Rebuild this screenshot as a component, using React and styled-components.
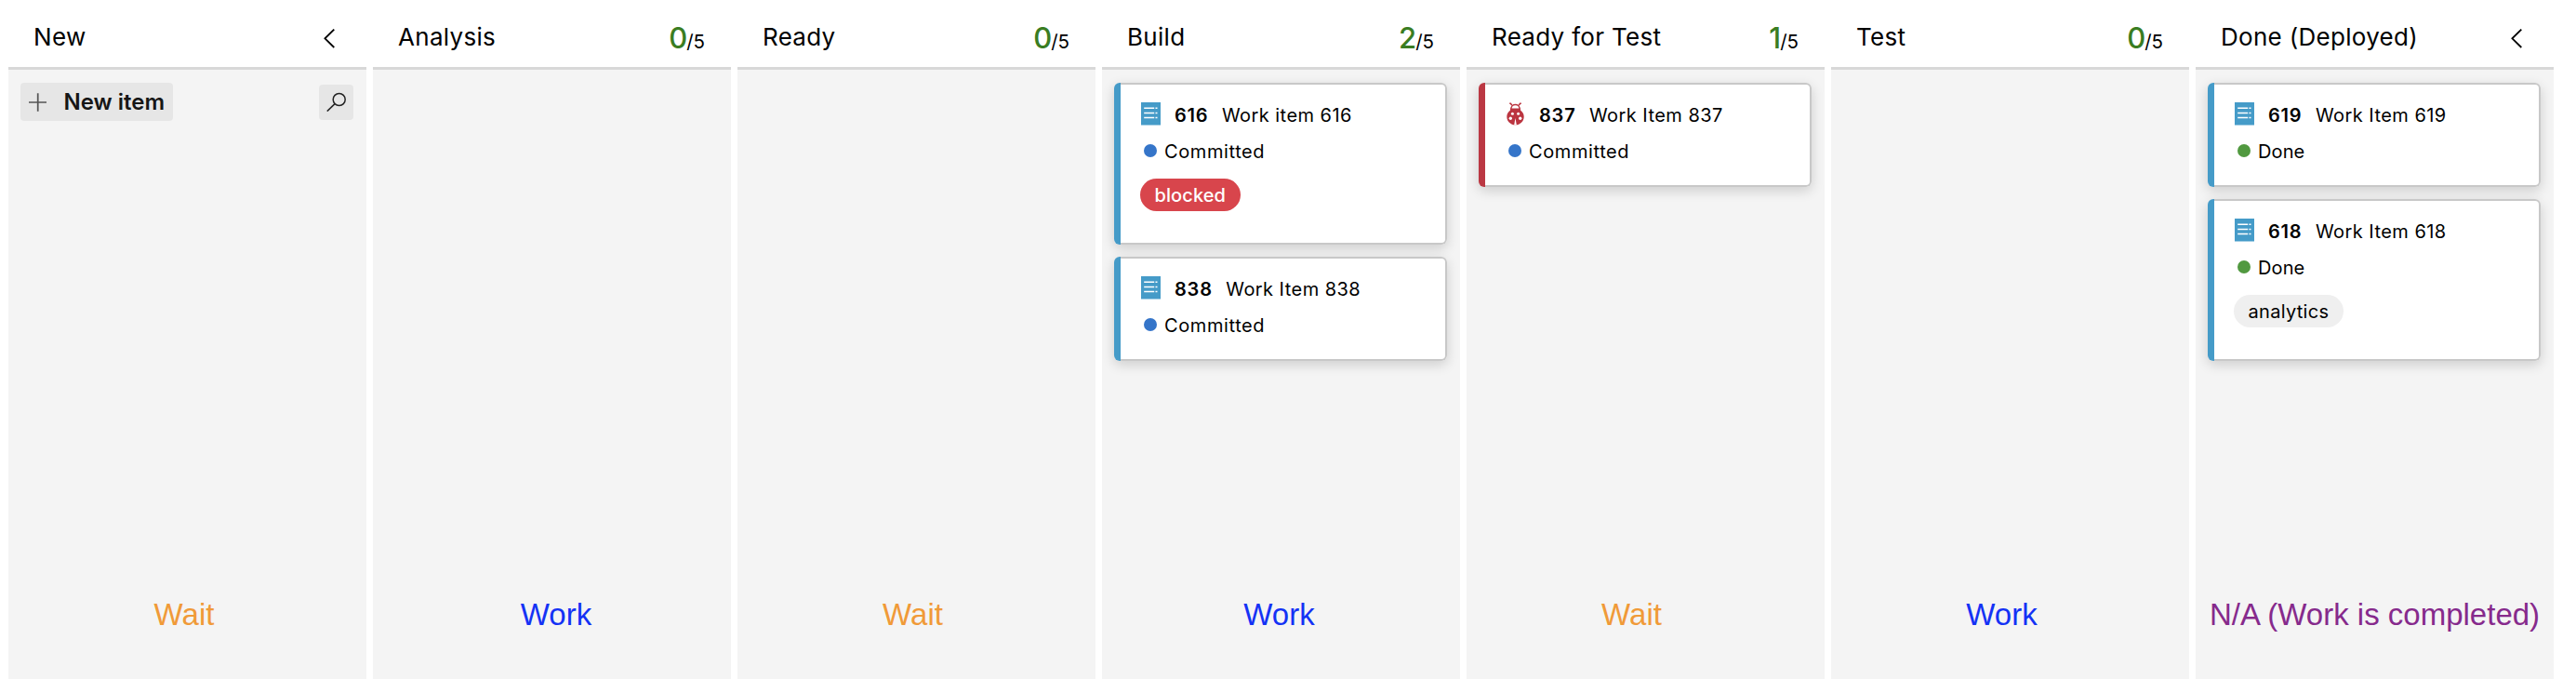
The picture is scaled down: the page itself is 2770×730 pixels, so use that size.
import React from "react";
import styled, { createGlobalStyle } from "styled-components";

const GlobalStyle = createGlobalStyle`
  * { box-sizing: border-box; }
  body { margin: 0; background: #fff; color: #000; font-family: Inter, "Liberation Sans", sans-serif; }
`;

const Board = styled.main`
  display: flex;
  gap: 7px;
  height: 730px;
  padding-left: 9px;
  overflow: hidden;
`;

const Column = styled.section`
  display: flex;
  flex: none;
  flex-direction: column;
  width: 385px;
`;

const ColumnHeader = styled.header`
  display: flex;
  justify-content: space-between;
  height: 75px;
  padding: 0 28px 0 27px;
  border-bottom: 3px solid #d8d8d8;
`;

const ColumnTitle = styled.h2`
  margin: 0;
  padding-top: 24px;
  font-size: 26px;
  font-weight: 400;
  line-height: 32px;
  letter-spacing: 0.3px;
  white-space: nowrap;
`;

const Limit = styled.div`
  display: flex;
  align-items: baseline;
  height: 40px;
  margin-top: 21px;
  font-size: 20.5px;
  line-height: 40px;
`;

const Count = styled.span`
  color: #3a7d22;
  font-size: 31px;
  font-weight: 500;
  letter-spacing: -1px;
`;

const CollapseIcon = styled.svg`
  width: 12px;
  height: 21px;
  margin: 31px 6px 0 0;
`;

const ColumnBody = styled.div`
  display: flex;
  flex: 1;
  flex-direction: column;
  gap: 13px;
  padding: 14px 14px 0 13px;
  background: #f4f4f4;
`;

const Toolbar = styled.div`
  display: flex;
  align-items: center;
  justify-content: space-between;
`;

const NewItemButton = styled.button`
  display: flex;
  align-items: center;
  gap: 18px;
  width: 164px;
  height: 41px;
  padding: 0 9px;
  border: 0;
  border-radius: 4px;
  background: #e6e6e6;
  color: #161616;
  font: 600 24px/41px Inter, sans-serif;
  white-space: nowrap;
`;

const SearchButton = styled.button`
  display: flex;
  width: 37px;
  height: 38px;
  padding: 8px;
  border: 0;
  border-radius: 4px;
  background: #e6e6e6;
`;

const CardFrame = styled.article`
  display: flex;
  height: ${(p) => (p.$tagged ? "174px" : "112px")};
  border-radius: 6px;
  background: linear-gradient(90deg, ${(p) => p.$accent} 7px, #fff 7px);
  box-shadow: 0 4px 13px rgba(0, 0, 0, 0.16);
`;

const CardContent = styled.div`
  flex: 1;
  margin-left: 7px;
  padding: 19px 0 0 22px;
  border: 2px solid #c8c8c8;
  border-left: 0;
  border-radius: 0 6px 6px 0;
`;

const TitleRow = styled.div`
  display: flex;
  height: 30px;
  font-size: 20px;
  letter-spacing: 0.45px;
  line-height: 28px;
  white-space: nowrap;
`;

const TypeIcon = styled.svg`
  width: 21px;
  height: 25px;
  margin-right: 15px;
`;

const ItemId = styled.strong`
  margin-right: 14.5px;
  font-weight: 600;
  letter-spacing: 0.8px;
`;

const StateRow = styled.div`
  display: flex;
  align-items: center;
  gap: 8px;
  height: 30px;
  margin-top: 7px;
  padding-left: 3px;
`;

const StateDot = styled.span`
  width: 14px;
  height: 14px;
  margin-top: -1px;
  border-radius: 50%;
  background: ${(p) => p.$color};
`;

const StateName = styled.span`
  padding-top: 1px;
  font-size: 20px;
  letter-spacing: ${(p) => (p.$compact ? "0.1px" : "0.6px")};
`;

const Tag = styled.span`
  display: block;
  width: fit-content;
  height: 35px;
  margin: 15px 0 0 -1px;
  padding: 0 15.5px;
  border-radius: 18px;
  background: ${(p) => (p.$alert ? "#d8454c" : "#efefef")};
  color: ${(p) => (p.$alert ? "#fff" : "#000")};
  font-size: 20px;
  font-weight: ${(p) => (p.$alert ? 500 : 400)};
  letter-spacing: ${(p) => (p.$alert ? "0.1px" : "0.3px")};
  line-height: 37px;
`;

const PhaseLabel = styled.footer`
  display: flex;
  justify-content: center;
  margin: auto -14px 50px -13px;
  padding-left: ${(p) => Math.max(p.$shift, 0) * 2}px;
  padding-right: ${(p) => Math.max(-p.$shift, 0) * 2}px;
  color: ${(p) => p.$color};
  font: 33px/38px "Liberation Sans", Arial, sans-serif;
  white-space: nowrap;
`;

const BacklogIcon = () => (
  <TypeIcon viewBox="0 0 21 25">
    <path fill="#459bc8" d="M0 0h21v24.500H0z" />
    <path stroke="#fff" strokeWidth="1.500" d="M3.200 6.200h11M15.500 6.200h2M3.200 11.400h11M15.500 11.400h2M3.200 16.600h11M15.500 16.600h2" />
  </TypeIcon>
);

const BugIcon = () => (
  <TypeIcon viewBox="0 0 21 25">
    <g fill="none" stroke="#bb3540" strokeWidth="1.500">
      <path d="M4.200 1.200h1.200l1.500 2M16.800 1.200h-1.200l-1.500 2" />
      <path d="M5.800 7.500C5.800 0.800 15.200 0.800 15.200 7.500" />
    </g>
    <path fill="#bb3540" d="M5 6.500h11v2.100c2.200 1.700 3.700 4 3.700 6.800 0 5.100-4.100 8.800-9.200 8.800s-9.200-3.700-9.200-8.800C1.300 12.600 2.800 10.300 5 8.600z" />
    <path fill="#fff" d="M10.500 17l1.300 7.200H9.200z" />
    <g fill="#fff">
      <circle cx="7.400" cy="12.300" r="1.500" />
      <circle cx="13.600" cy="12.300" r="1.500" />
      <circle cx="5.300" cy="17.300" r="1.700" />
      <circle cx="15.700" cy="17.300" r="1.700" />
    </g>
  </TypeIcon>
);

const states = { Committed: "#3575c9", Done: "#519940" };

function Card({ id, title, state, tag, bug }) {
  return (
    <CardFrame $tagged={Boolean(tag)} $accent={bug ? "#bb3843" : "#459bc8"}>
      <CardContent>
        <TitleRow>
          {bug ? <BugIcon /> : <BacklogIcon />}
          <ItemId>{id}</ItemId>
          <span>{title}</span>
        </TitleRow>
        <StateRow>
          <StateDot $color={states[state]} />
          <StateName $compact={state === "Done"}>{state}</StateName>
        </StateRow>
        {tag && <Tag $alert={tag === "blocked"}>{tag}</Tag>}
      </CardContent>
    </CardFrame>
  );
}

const phases = { Wait: "#f09a38", Work: "#1432f5", "N/A (Work is completed)": "#862a8c" };

const columns = [
  { title: "New", phase: "Wait", shift: -3.5, backlog: true },
  { title: "Analysis", count: 0, phase: "Work", shift: 4.5 },
  { title: "Ready", count: 0, phase: "Wait", shift: -4 },
  {
    title: "Build", count: 2, phase: "Work", shift: -2,
    cards: [
      { id: 616, title: "Work item 616", state: "Committed", tag: "blocked" },
      { id: 838, title: "Work Item 838", state: "Committed" },
    ],
  },
  {
    title: "Ready for Test", count: 1, phase: "Wait", shift: -15,
    cards: [{ id: 837, title: "Work Item 837", state: "Committed", bug: true }],
  },
  { title: "Test", count: 0, phase: "Work", shift: -9 },
  {
    title: "Done (Deployed)", phase: "N/A (Work is completed)", shift: 0,
    cards: [
      { id: 619, title: "Work Item 619", state: "Done" },
      { id: 618, title: "Work Item 618", state: "Done", tag: "analytics" },
    ],
  },
];

export default function App() {
  return (
    <>
      <GlobalStyle />
      <Board>
        {columns.map((column) => (
          <Column key={column.title}>
            <ColumnHeader>
              <ColumnTitle>{column.title}</ColumnTitle>
              {column.count === undefined ? (
                <CollapseIcon viewBox="0 0 12 21" fill="none" stroke="#000" strokeWidth="1.8">
                  <path d="M11.300 0.600L1.400 10.300l9.900 9.700" />
                </CollapseIcon>
              ) : (
                <Limit>
                  <Count>{column.count}</Count>/5
                </Limit>
              )}
            </ColumnHeader>
            <ColumnBody>
              {column.backlog && (
                <Toolbar>
                  <NewItemButton>
                    <svg width="20" height="20" viewBox="0 0 20 20" stroke="#555" strokeWidth="1.800">
                      <path d="M0 10h20M10 0v20" />
                    </svg>
                    New item
                  </NewItemButton>
                  <SearchButton aria-label="Search">
                    <svg width="21" height="21" viewBox="0 0 21 21" fill="none" stroke="#222" strokeWidth="1.500">
                      <circle cx="13.700" cy="8" r="6.500" />
                      <path d="M9 12.600L0.800 20.600" />
                    </svg>
                  </SearchButton>
                </Toolbar>
              )}
              {column.cards?.map((card) => <Card key={card.id} {...card} />)}
              <PhaseLabel $color={phases[column.phase]} $shift={column.shift}>{column.phase}</PhaseLabel>
            </ColumnBody>
          </Column>
        ))}
      </Board>
    </>
  );
}
